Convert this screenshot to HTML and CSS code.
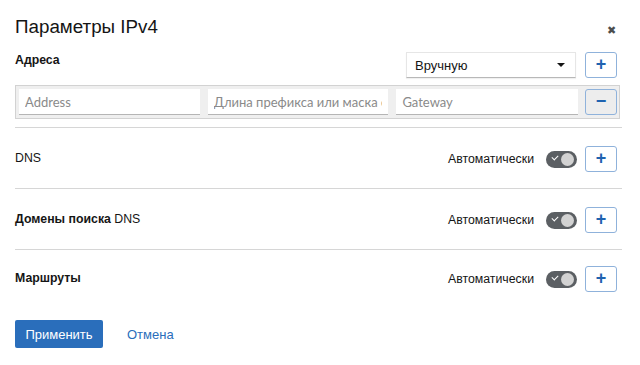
FILE: index.html
```html
<!DOCTYPE html>
<html lang="ru">
<head>
    <meta charset="UTF-8">
    <title>Параметры IPv4</title>
    <link rel="stylesheet" href="styles.css">
</head>
<body>
    <div class="dialog">
        <div class="dialog-header">
            <h1>Параметры IPv4</h1>
            <span class="close">&#10006;</span>
        </div>

        <!-- Адреса -->
        <div class="section section-addr">
            <div class="row-top">
                <span class="label">Адреса</span>
                <div class="controls">
                    <div class="select">Вручную<span class="caret"></span></div>
                    <button class="btn-icon">+</button>
                </div>
            </div>
            <div class="addr-box">
                <input class="field f-addr" placeholder="Address">
                <input class="field f-prefix" placeholder="Длина префикса или маска сети">
                <input class="field f-gw" placeholder="Gateway">
                <button class="btn-icon btn-minus">&minus;</button>
            </div>
        </div>

        <div class="section">
            <span class="label normal">DNS</span>
            <div class="controls">
                <span class="auto">Автоматически</span>
                <span class="toggle"><span class="check"></span><span class="knob"></span></span>
                <button class="btn-icon">+</button>
            </div>
        </div>

        <div class="section">
            <span class="label">Домены поиска <span class="normal">DNS</span></span>
            <div class="controls">
                <span class="auto">Автоматически</span>
                <span class="toggle"><span class="check"></span><span class="knob"></span></span>
                <button class="btn-icon">+</button>
            </div>
        </div>

        <div class="section section-last">
            <span class="label">Маршруты</span>
            <div class="controls">
                <span class="auto">Автоматически</span>
                <span class="toggle"><span class="check"></span><span class="knob"></span></span>
                <button class="btn-icon">+</button>
            </div>
        </div>

        <div class="footer">
            <button class="btn-primary">Применить</button>
            <a href="#" class="link">Отмена</a>
        </div>
    </div>
</body>
</html>
```

FILE: styles.css
```css
body {
    margin: 0;
    background: #ffffff;
    font-family: "Liberation Sans", Arial, sans-serif;
    color: #151515;
    font-size: 12.3px;
}
.dialog {
    padding: 14px 18px 0 15px;
}
.dialog-header {
    display: flex;
    justify-content: space-between;
    align-items: center;
    height: 26px;
}
.dialog-header h1 {
    margin: 0;
    font-size: 18.8px;
    font-weight: normal;
    color: #151515;
}
.close {
    font-size: 11px;
    color: #4d4d4d;
    margin-right: 6px;
    margin-top: 6px;
}
.section {
    display: flex;
    justify-content: space-between;
    align-items: center;
    padding: 18px 5px 16px 0;
    border-bottom: 1px solid #d6d6d6;
}
.section-last {
    border-bottom: none;
    padding-top: 16px;
}
.section-addr {
    display: block;
    padding: 12px 0 8px 0;
}
.row-top {
    display: flex;
    justify-content: space-between;
    align-items: flex-start;
    padding-right: 5px;
}
.label {
    font-weight: bold;
    padding-top: 1px;
}
.section .label {
    margin-top: -4px;
}
.section-addr .label {
    margin-top: 0;
}
.normal {
    font-weight: normal;
}
.controls {
    display: flex;
    align-items: center;
}
.select {
    width: 150px;
    height: 24px;
    border: 1px solid #e6e6e6;
    border-bottom-color: #b8b8b8;
    display: flex;
    align-items: center;
    justify-content: space-between;
    padding: 0 10px 0 8px;
    margin-right: 9px;
    font-size: 13px;
    color: #151515;
    box-shadow: 0 1px 1px rgba(0,0,0,0.06);
}
.caret {
    width: 0;
    height: 0;
    border-left: 4px solid transparent;
    border-right: 4px solid transparent;
    border-top: 4px solid #151515;
}
.btn-icon {
    width: 32px;
    height: 26px;
    border: 1px solid #8fb2db;
    border-radius: 3px;
    background: #ffffff;
    color: #1f63b0;
    font-family: "Liberation Sans", Arial, sans-serif;
    font-size: 18px;
    font-weight: bold;
    line-height: 1;
    padding: 0 0 2px 0;
}
.addr-box {
    display: flex;
    align-items: center;
    margin-top: 7px;
    height: 32px;
    background: #efefef;
    border: 1px solid #d2d2d2;
    padding: 0 2px 0 3px;
    margin-right: 2px;
}
.field {
    height: 26px;
    box-sizing: border-box;
    border: none;
    border-bottom: 1px solid #b5b5b5;
    background: #ffffff;
    padding: 0 6px;
    font-family: Lato, "Liberation Sans", sans-serif;
    font-size: 13px;
    margin-right: 8px;
}
.field::placeholder {
    color: #8a8a8a;
}
.f-addr { width: 181px; }
.f-prefix { width: 181px; }
.f-gw { width: 182px; margin-right: 7px; }
.btn-minus {
    background: #ededed;
    height: 26px;
    color: #1f63b0;
}
.auto {
    margin-right: 12px;
    color: #151515;
}
.toggle {
    position: relative;
    width: 31px;
    height: 17px;
    border-radius: 9px;
    background: #5b5f63;
    margin-right: 8px;
}
.check {
    position: absolute;
    left: 6px;
    top: 4px;
    width: 5px;
    height: 3px;
    border-left: 1.5px solid #ffffff;
    border-bottom: 1.5px solid #ffffff;
    transform: rotate(-45deg);
}
.knob {
    position: absolute;
    right: 3px;
    top: 2px;
    width: 13px;
    height: 13px;
    border-radius: 50%;
    background: #d2d2d2;
}
.footer {
    display: flex;
    align-items: center;
    padding-top: 12px;
}
.btn-primary {
    width: 88px;
    height: 28px;
    background: #2a6ebb;
    border: none;
    border-radius: 2px;
    color: #ffffff;
    font-family: "Liberation Sans", Arial, sans-serif;
    font-size: 13px;
    margin-right: 24px;
}
.link {
    color: #2a6ebb;
    text-decoration: none;
    font-size: 13px;
}
```
